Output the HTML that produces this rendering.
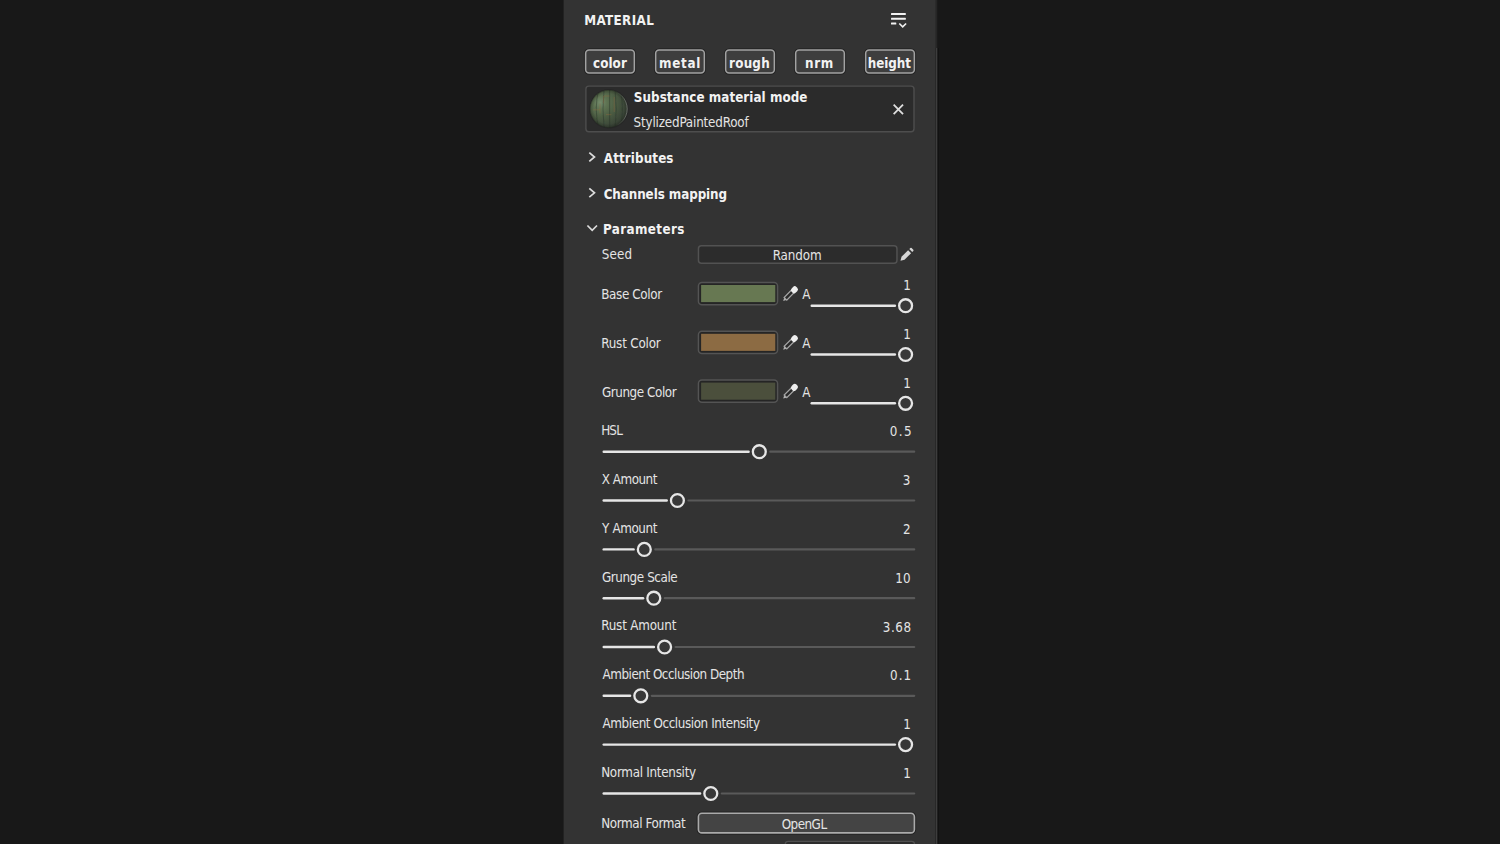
<!DOCTYPE html>
<html lang="en"><head><meta charset="utf-8"><title>Material</title>
<style>
html,body{margin:0;padding:0;}
body{width:1500px;height:844px;overflow:hidden;background:#181818;position:relative;
 font-family:"DejaVu Sans Condensed","DejaVu Sans","Liberation Sans",sans-serif;font-stretch:condensed;}
#panel{position:absolute;left:564px;top:0;width:371px;height:844px;background:#333333;box-shadow:-1px 0 0 #222222;}
#sb{position:absolute;left:935px;top:0;width:4px;height:844px;background:linear-gradient(90deg,#2b2b2b 0,#2b2b2b 1px,#262626 1px,#262626 2px,#1b1b1b 2px,#1b1b1b 3px,#181818 3px);}
#sb i{position:absolute;left:0;top:48px;width:4px;height:796px;background:linear-gradient(90deg,#282828 0,#282828 1px,#3d3d3d 1px,#3d3d3d 2px,#202020 2px,#202020 3px,#121212 3px);}
.t{position:absolute;font-size:13.3px;line-height:16px;color:#e4e4e4;white-space:nowrap;font-weight:400;}
.b{font-weight:700;}
svg{position:absolute;left:0;top:0;}
</style></head><body>
<div id="panel"></div>
<div id="sb"><i></i></div>
<svg width="1500" height="844" viewBox="0 0 1500 844">
<rect x="585.65" y="50.05" width="48.70" height="23.00" rx="3.5" fill="none" stroke="#000" stroke-opacity="0.3" stroke-width="3.50"/><rect x="585.65" y="50.05" width="48.70" height="23.00" rx="3.5" fill="#3e3e3e" stroke="#a2a2a2" stroke-width="1.5"/>
<rect x="655.65" y="50.05" width="48.70" height="23.00" rx="3.5" fill="none" stroke="#000" stroke-opacity="0.3" stroke-width="3.50"/><rect x="655.65" y="50.05" width="48.70" height="23.00" rx="3.5" fill="#3e3e3e" stroke="#a2a2a2" stroke-width="1.5"/>
<rect x="725.65" y="50.05" width="48.70" height="23.00" rx="3.5" fill="none" stroke="#000" stroke-opacity="0.3" stroke-width="3.50"/><rect x="725.65" y="50.05" width="48.70" height="23.00" rx="3.5" fill="#3e3e3e" stroke="#a2a2a2" stroke-width="1.5"/>
<rect x="795.65" y="50.05" width="48.70" height="23.00" rx="3.5" fill="none" stroke="#000" stroke-opacity="0.3" stroke-width="3.50"/><rect x="795.65" y="50.05" width="48.70" height="23.00" rx="3.5" fill="#3e3e3e" stroke="#a2a2a2" stroke-width="1.5"/>
<rect x="865.65" y="50.05" width="48.70" height="23.00" rx="3.5" fill="none" stroke="#000" stroke-opacity="0.3" stroke-width="3.50"/><rect x="865.65" y="50.05" width="48.70" height="23.00" rx="3.5" fill="#3e3e3e" stroke="#a2a2a2" stroke-width="1.5"/>
<rect x="585.90" y="86.10" width="328.10" height="45.70" rx="3" fill="#2b2b2b" stroke="#4e4e4e" stroke-width="1.4"/>
<rect x="698.45" y="245.65" width="198.50" height="17.50" rx="3" fill="#2c2c2c" stroke="#525252" stroke-width="1.5"/>
<rect x="698.45" y="282.45" width="79.10" height="22.30" rx="3.5" fill="#252525" stroke="#545454" stroke-width="1.5"/>
<rect x="701.1" y="285.0" width="74.2" height="17.1" fill="#677852"/>
<rect x="698.45" y="331.25" width="79.10" height="22.30" rx="3.5" fill="#252525" stroke="#545454" stroke-width="1.5"/>
<rect x="701.1" y="333.8" width="74.2" height="17.1" fill="#8c6b43"/>
<rect x="698.45" y="380.05" width="79.10" height="22.30" rx="3.5" fill="#252525" stroke="#545454" stroke-width="1.5"/>
<rect x="701.1" y="382.6" width="74.2" height="17.1" fill="#4b4f3c"/>
<rect x="698.40" y="813.20" width="216.00" height="19.70" rx="3.5" fill="none" stroke="#000" stroke-opacity="0.3" stroke-width="3.60"/><rect x="698.40" y="813.20" width="216.00" height="19.70" rx="3.5" fill="#444444" stroke="#aaaaaa" stroke-width="1.6"/>
<rect x="785.25" y="841.45" width="129.30" height="17.90" rx="3" fill="#2c2c2c" stroke="#505050" stroke-width="1.3"/>
<defs>
<clipPath id="bc"><circle cx="608.9" cy="108.9" r="18.8"/></clipPath>
<radialGradient id="bg1" cx="0.27" cy="0.33" r="0.8">
<stop offset="0" stop-color="#748a6c"/><stop offset="0.22" stop-color="#5e7352"/><stop offset="0.5" stop-color="#4c5d43"/><stop offset="0.78" stop-color="#3d4939"/><stop offset="1" stop-color="#323a30"/>
</radialGradient>
<radialGradient id="bg2" cx="0.5" cy="0.5" r="0.5">
<stop offset="0.8" stop-color="#000" stop-opacity="0"/><stop offset="0.94" stop-color="#000" stop-opacity=".15"/><stop offset="1" stop-color="#000" stop-opacity=".4"/>
</radialGradient>
<linearGradient id="bg3" x1="0" x2="1" y1="0" y2="0"><stop offset="0.7" stop-color="#fff" stop-opacity="0"/><stop offset="1" stop-color="#fff" stop-opacity=".3"/></linearGradient>
<filter id="bl" x="-20%" y="-20%" width="140%" height="140%"><feGaussianBlur stdDeviation=".45"/></filter>
</defs>
<circle cx="608.9" cy="108.9" r="19.6" fill="#222" opacity=".6"/>
<circle cx="608.9" cy="108.9" r="18.8" fill="url(#bg1)"/>
<g clip-path="url(#bc)" fill="none" filter="url(#bl)">
<g stroke="#29332a" stroke-opacity=".5" stroke-width=".9">
<path d="M598.5 90 Q594 109 598.5 128"/><path d="M604 90 Q602 109 604 128"/><path d="M609.6 90 V128"/><path d="M615.2 90 Q617.2 109 615.2 128"/><path d="M620.4 90 Q624.4 109 620.4 128"/>
</g>
<g stroke="#96693c" stroke-opacity=".45" stroke-width=".8">
<path d="M593 109.8 H600"/><path d="M606 114.6 H611.4"/><path d="M603.6 96 V103.4"/><path d="M600 103.6 V113.4"/><path d="M609.6 96 H603.8"/><path d="M614.2 97 V112"/>
</g>
</g>
<circle cx="608.9" cy="108.9" r="18.8" fill="url(#bg2)"/>
<circle cx="608.9" cy="108.9" r="18.3" fill="none" stroke="url(#bg3)" stroke-width="1"/>
<!-- header menu icon -->
<g fill="#f2f2f2">
<rect x="891" y="13" width="14.8" height="2" rx=".5"/>
<rect x="891" y="17.7" width="14.8" height="2" rx=".5"/>
<rect x="891" y="22.6" width="5.3" height="2" rx=".5"/>
</g>
<path d="M899.3 23.5 L902.7 26.9 L906.1 23.5" fill="none" stroke="#f2f2f2" stroke-width="1.6"/>
<!-- close X -->
<path d="M893.65 104.65 L903.05 114.05 M903.05 104.65 L893.65 114.05" stroke="#dedede" stroke-width="1.8" fill="none"/>
<!-- chevrons -->
<path d="M589.3 152.6 L594.5 157 L589.3 161.4" fill="none" stroke="#dcdcdc" stroke-width="1.7"/>
<path d="M589.3 188.4 L594.5 192.8 L589.3 197.2" fill="none" stroke="#dcdcdc" stroke-width="1.7"/>
<path d="M587.4 225.5 L592.2 230.4 L597 225.5" fill="none" stroke="#dcdcdc" stroke-width="1.7"/>
<!-- pencil -->
<g transform="translate(900,248)" fill="#d6d6d6">
<path d="M0.5 12.8 L1.5 8.8 L8.1 2.2 L11.1 5.2 L4.5 11.8 Z"/>
<path d="M9.3 1.1 L10.4 0 Q11 -0.5 11.6 0 L13.3 1.7 Q13.8 2.3 13.3 2.9 L12.2 4 Z"/>
</g>
<g transform="translate(783.2,301) rotate(45)"><path d="M0 0 L-1.9 -3.6 L1.9 -3.6 Z" fill="#b4b4b4"/><rect x="-1.85" y="-13.4" width="3.7" height="10.2" fill="#2a2a2a" stroke="#a6a6a6" stroke-width="1.25"/><rect x="-2.95" y="-19.3" width="5.9" height="6.8" rx="2.4" fill="#eeeeee"/></g>
<g transform="translate(783.2,349.8) rotate(45)"><path d="M0 0 L-1.9 -3.6 L1.9 -3.6 Z" fill="#b4b4b4"/><rect x="-1.85" y="-13.4" width="3.7" height="10.2" fill="#2a2a2a" stroke="#a6a6a6" stroke-width="1.25"/><rect x="-2.95" y="-19.3" width="5.9" height="6.8" rx="2.4" fill="#eeeeee"/></g>
<g transform="translate(783.2,398.6) rotate(45)"><path d="M0 0 L-1.9 -3.6 L1.9 -3.6 Z" fill="#b4b4b4"/><rect x="-1.85" y="-13.4" width="3.7" height="10.2" fill="#2a2a2a" stroke="#a6a6a6" stroke-width="1.25"/><rect x="-2.95" y="-19.3" width="5.9" height="6.8" rx="2.4" fill="#eeeeee"/></g>
<line x1="811.7" y1="305.7" x2="894.9" y2="305.7" stroke="#e6e6e6" stroke-width="2.4" stroke-linecap="round"/>
<circle cx="905.6" cy="305.7" r="6.45" fill="#383838" stroke="#e6e6e6" stroke-width="2.3"/>
<line x1="811.7" y1="354.5" x2="894.9" y2="354.5" stroke="#e6e6e6" stroke-width="2.4" stroke-linecap="round"/>
<circle cx="905.6" cy="354.5" r="6.45" fill="#383838" stroke="#e6e6e6" stroke-width="2.3"/>
<line x1="811.7" y1="403.3" x2="894.9" y2="403.3" stroke="#e6e6e6" stroke-width="2.4" stroke-linecap="round"/>
<circle cx="905.6" cy="403.3" r="6.45" fill="#383838" stroke="#e6e6e6" stroke-width="2.3"/>
<line x1="770.3" y1="451.7" x2="914.2" y2="451.7" stroke="#5a5a5a" stroke-width="2.2" stroke-linecap="round"/>
<line x1="603.7" y1="451.7" x2="748.6" y2="451.7" stroke="#e6e6e6" stroke-width="2.4" stroke-linecap="round"/>
<circle cx="759.3" cy="451.7" r="6.45" fill="#383838" stroke="#e6e6e6" stroke-width="2.3"/>
<line x1="688.4" y1="500.5" x2="914.2" y2="500.5" stroke="#5a5a5a" stroke-width="2.2" stroke-linecap="round"/>
<line x1="603.7" y1="500.5" x2="666.7" y2="500.5" stroke="#e6e6e6" stroke-width="2.4" stroke-linecap="round"/>
<circle cx="677.4" cy="500.5" r="6.45" fill="#383838" stroke="#e6e6e6" stroke-width="2.3"/>
<line x1="655.3" y1="549.4" x2="914.2" y2="549.4" stroke="#5a5a5a" stroke-width="2.2" stroke-linecap="round"/>
<line x1="603.7" y1="549.4" x2="633.6" y2="549.4" stroke="#e6e6e6" stroke-width="2.4" stroke-linecap="round"/>
<circle cx="644.3" cy="549.4" r="6.45" fill="#383838" stroke="#e6e6e6" stroke-width="2.3"/>
<line x1="664.8" y1="598.2" x2="914.2" y2="598.2" stroke="#5a5a5a" stroke-width="2.2" stroke-linecap="round"/>
<line x1="603.7" y1="598.2" x2="643.1" y2="598.2" stroke="#e6e6e6" stroke-width="2.4" stroke-linecap="round"/>
<circle cx="653.8" cy="598.2" r="6.45" fill="#383838" stroke="#e6e6e6" stroke-width="2.3"/>
<line x1="675.6" y1="647.0" x2="914.2" y2="647.0" stroke="#5a5a5a" stroke-width="2.2" stroke-linecap="round"/>
<line x1="603.7" y1="647.0" x2="653.9" y2="647.0" stroke="#e6e6e6" stroke-width="2.4" stroke-linecap="round"/>
<circle cx="664.6" cy="647.0" r="6.45" fill="#383838" stroke="#e6e6e6" stroke-width="2.3"/>
<line x1="651.8" y1="695.8" x2="914.2" y2="695.8" stroke="#5a5a5a" stroke-width="2.2" stroke-linecap="round"/>
<line x1="603.7" y1="695.8" x2="630.1" y2="695.8" stroke="#e6e6e6" stroke-width="2.4" stroke-linecap="round"/>
<circle cx="640.8" cy="695.8" r="6.45" fill="#383838" stroke="#e6e6e6" stroke-width="2.3"/>
<line x1="603.7" y1="744.6" x2="894.9" y2="744.6" stroke="#e6e6e6" stroke-width="2.4" stroke-linecap="round"/>
<circle cx="905.6" cy="744.6" r="6.45" fill="#383838" stroke="#e6e6e6" stroke-width="2.3"/>
<line x1="721.8" y1="793.5" x2="914.2" y2="793.5" stroke="#5a5a5a" stroke-width="2.2" stroke-linecap="round"/>
<line x1="603.7" y1="793.5" x2="700.1" y2="793.5" stroke="#e6e6e6" stroke-width="2.4" stroke-linecap="round"/>
<circle cx="710.8" cy="793.5" r="6.45" fill="#383838" stroke="#e6e6e6" stroke-width="2.3"/>
</svg>
<span class="t b" id="t0" style="left:584.15px;top:13px;letter-spacing:0.376px;color:#f2f2f2;">MATERIAL</span>
<span class="t b" id="t1" style="left:592.98px;top:56px;letter-spacing:0.080px;color:#f2f2f2;">color</span>
<span class="t b" id="t2" style="left:658.93px;top:56px;letter-spacing:0.741px;color:#f2f2f2;">metal</span>
<span class="t b" id="t3" style="left:729.08px;top:56px;letter-spacing:0.219px;color:#f2f2f2;">rough</span>
<span class="t b" id="t4" style="left:805.11px;top:56px;letter-spacing:0.553px;color:#f2f2f2;">nrm</span>
<span class="t b" id="t5" style="left:867.71px;top:56px;letter-spacing:-0.033px;color:#f2f2f2;">height</span>
<span class="t b" id="t6" style="left:633.85px;top:90px;letter-spacing:0.045px;color:#f2f2f2;">Substance material mode</span>
<span class="t" id="t7" style="left:633.61px;top:115px;letter-spacing:-0.180px;">StylizedPaintedRoof</span>
<span class="t b" id="t8" style="left:603.87px;top:151px;letter-spacing:0.098px;color:#f2f2f2;">Attributes</span>
<span class="t b" id="t9" style="left:603.63px;top:187px;letter-spacing:-0.083px;color:#f2f2f2;">Channels mapping</span>
<span class="t b" id="t10" style="left:603.00px;top:222px;letter-spacing:0.385px;color:#f2f2f2;">Parameters</span>
<span class="t" id="t11" style="left:601.82px;top:247px;letter-spacing:0.129px;">Seed</span>
<span class="t" id="t12" style="left:772.64px;top:248px;letter-spacing:-0.086px;">Random</span>
<span class="t" id="t13" style="left:601.20px;top:287px;letter-spacing:-0.358px;">Base Color</span>
<span class="t" id="t14" style="left:802.13px;top:287px;">A</span>
<span class="t" id="t15" style="left:903.30px;top:278px;">1</span>
<span class="t" id="t16" style="left:601.20px;top:336px;letter-spacing:-0.194px;">Rust Color</span>
<span class="t" id="t17" style="left:802.13px;top:336px;">A</span>
<span class="t" id="t18" style="left:903.30px;top:327px;">1</span>
<span class="t" id="t19" style="left:601.94px;top:385px;letter-spacing:-0.423px;">Grunge Color</span>
<span class="t" id="t20" style="left:802.13px;top:385px;">A</span>
<span class="t" id="t21" style="left:903.30px;top:376px;">1</span>
<span class="t" id="t22" style="left:601.20px;top:423px;letter-spacing:-0.826px;">HSL</span>
<span class="t" id="t23" style="left:889.65px;top:424px;letter-spacing:1.495px;">0.5</span>
<span class="t" id="t24" style="left:601.83px;top:472px;letter-spacing:-0.500px;">X Amount</span>
<span class="t" id="t25" style="left:902.74px;top:473px;">3</span>
<span class="t" id="t26" style="left:602.12px;top:521px;letter-spacing:-0.413px;">Y Amount</span>
<span class="t" id="t27" style="left:902.95px;top:522px;">2</span>
<span class="t" id="t28" style="left:601.94px;top:570px;letter-spacing:-0.417px;">Grunge Scale</span>
<span class="t" id="t29" style="left:895.28px;top:571px;letter-spacing:0.224px;">10</span>
<span class="t" id="t30" style="left:601.20px;top:618px;letter-spacing:-0.187px;">Rust Amount</span>
<span class="t" id="t31" style="left:882.78px;top:620px;letter-spacing:0.590px;">3.68</span>
<span class="t" id="t32" style="left:602.56px;top:667px;letter-spacing:-0.475px;">Ambient Occlusion Depth</span>
<span class="t" id="t33" style="left:889.90px;top:668px;letter-spacing:1.153px;">0.1</span>
<span class="t" id="t34" style="left:602.56px;top:716px;letter-spacing:-0.406px;">Ambient Occlusion Intensity</span>
<span class="t" id="t35" style="left:903.30px;top:717px;">1</span>
<span class="t" id="t36" style="left:601.20px;top:765px;letter-spacing:-0.277px;">Normal Intensity</span>
<span class="t" id="t37" style="left:903.30px;top:766px;">1</span>
<span class="t" id="t38" style="left:601.20px;top:816px;letter-spacing:-0.381px;">Normal Format</span>
<span class="t" id="t39" style="left:781.64px;top:817px;letter-spacing:-0.492px;">OpenGL</span>
</body></html>
